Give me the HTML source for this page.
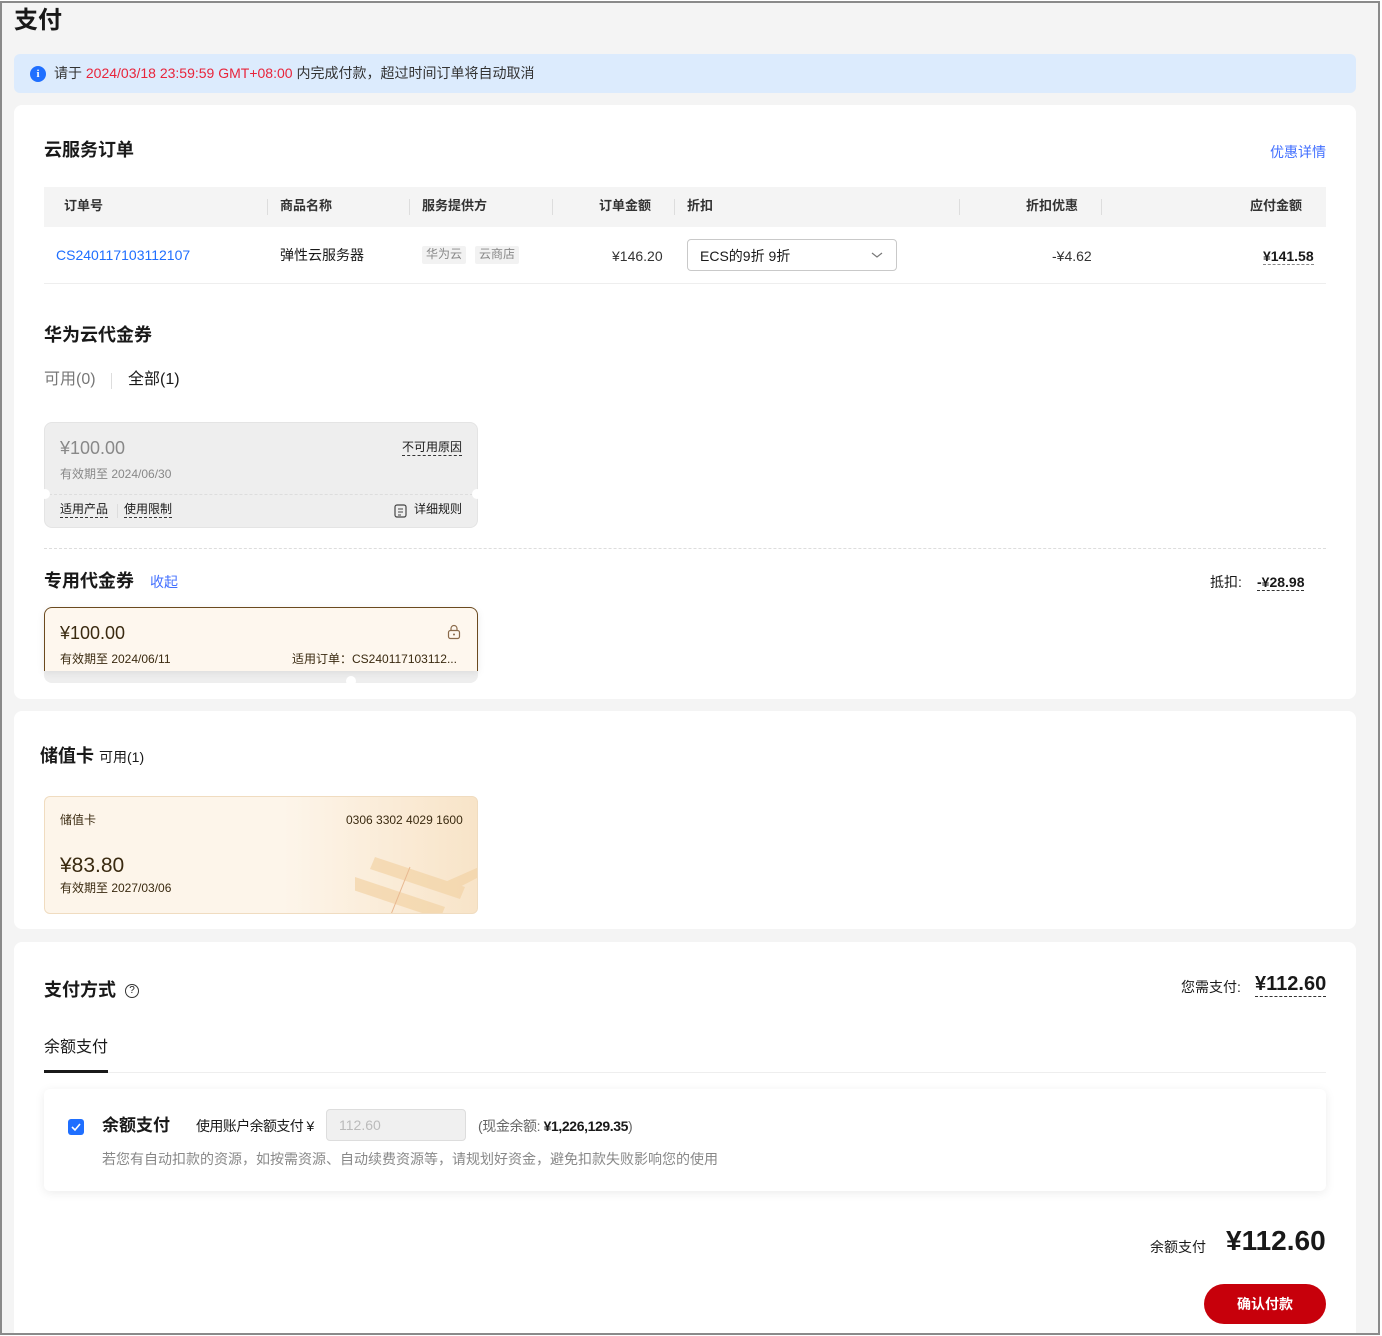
<!DOCTYPE html>
<html><head><meta charset="utf-8"><style>
*{box-sizing:border-box;margin:0;padding:0}
body{width:1382px;height:1336px;background:#fff;font-family:"Liberation Sans","Noto Sans CJK SC",sans-serif;color:#191919;position:relative;overflow:hidden;font-size:13px;line-height:1.15}
.frame{position:absolute;left:0;top:1px;width:1380px;height:1334px;border:2px solid #8a8a8a;background:#f4f4f4;overflow:hidden}
.a{position:absolute;white-space:nowrap}
.card{position:absolute;background:#fff;border-radius:8px}
.dash{border-bottom:1px dashed #333}
.th{color:#333;font-weight:bold;font-size:13px}
.sep{position:absolute;width:1px;height:16px;background:#ddd}
</style></head><body>
<div class="frame">
<div class="a" style="left:12px;top:4px;font-size:24px;font-weight:bold;">支付</div>
<div class="a" style="left:12px;top:51px;width:1342px;height:39px;background:#dcebfd;border-radius:6px"></div>
<div class="a" style="left:28px;top:63px;width:16px;height:16px;border-radius:50%;background:#1f6fff;color:#fff;font-size:11px;font-weight:bold;text-align:center;line-height:16px;font-family:'Liberation Serif',serif">i</div>
<div class="a" style="left:52px;top:62px;font-size:14px;color:#333">请于 <span style="color:#e8243b">2024/03/18 23:59:59 GMT+08:00</span> 内完成付款，超过时间订单将自动取消</div>

<div class="card" style="left:12px;top:102px;width:1342px;height:594px"></div>
<div class="a" style="left:42px;top:137px;font-size:18px;font-weight:bold">云服务订单</div>
<div class="a" style="left:1268px;top:141px;font-size:14px;color:#4370ff">优惠详情</div>
<div class="a" style="left:42px;top:184px;width:1282px;height:40px;background:#f4f4f4"></div>
<div class="a th" style="left:62px;top:196px">订单号</div>
<div class="sep" style="left:265px;top:196px"></div>
<div class="a th" style="left:278px;top:196px">商品名称</div>
<div class="sep" style="left:407px;top:196px"></div>
<div class="a th" style="left:420px;top:196px">服务提供方</div>
<div class="sep" style="left:550px;top:196px"></div>
<div class="a th" style="left:597px;top:196px">订单金额</div>
<div class="sep" style="left:672px;top:196px"></div>
<div class="a th" style="left:685px;top:196px">折扣</div>
<div class="sep" style="left:957px;top:196px"></div>
<div class="a th" style="left:1024px;top:196px">折扣优惠</div>
<div class="sep" style="left:1099px;top:196px"></div>
<div class="a th" style="left:1248px;top:196px">应付金额</div>
<div class="a" style="left:54px;top:244px;color:#1f6fff;font-size:14px">CS240117103112107</div>
<div class="a" style="left:278px;top:244px;font-size:14px">弹性云服务器</div>
<div class="a" style="left:420px;top:243px;background:#f2f2f2;color:#888;font-size:12px;padding:2px 4px;border-radius:2px">华为云</div>
<div class="a" style="left:473px;top:243px;background:#f2f2f2;color:#888;font-size:12px;padding:2px 4px;border-radius:2px">云商店</div>
<div class="a" style="left:610px;top:245px;font-size:14px;color:#333">¥146.20</div>
<div class="a" style="left:685px;top:236px;width:210px;height:32px;border:1px solid #c9c9c9;border-radius:4px"></div>
<div class="a" style="left:698px;top:245px;font-size:14px">ECS的9折 9折</div>
<svg class="a" style="left:869px;top:247px" width="12" height="10"><path d="M1 3l5 4 5-4" fill="none" stroke="#777" stroke-width="1.2"/></svg>
<div class="a" style="left:1050px;top:245px;font-size:14px;color:#333">-¥4.62</div>
<div class="a dash" style="left:1261px;top:245px;font-size:14px;font-weight:bold;border-bottom-color:#888">¥141.58</div>
<div class="a" style="left:42px;top:280px;width:1282px;height:1px;background:#eee"></div>

<div class="a" style="left:42px;top:322px;font-size:18px;font-weight:bold">华为云代金券</div>
<div class="a" style="left:42px;top:368px;font-size:16px;color:#777">可用(0)</div>
<div class="sep" style="left:109px;top:370px"></div>
<div class="a" style="left:126px;top:368px;font-size:16px">全部(1)</div>

<div class="a" style="left:42px;top:419px;width:434px;height:106px;background:#eeeeee;border-radius:8px;border:1px solid #e4e4e4"></div>
<div class="a" style="left:42px;top:491px;width:434px;height:0;border-top:1px dashed #ddd"></div>
<div class="a" style="left:38px;top:486px;width:10px;height:10px;border-radius:50%;background:#fff"></div>
<div class="a" style="left:470px;top:486px;width:10px;height:10px;border-radius:50%;background:#fff"></div>
<div class="a" style="left:58px;top:435px;font-size:18px;color:#888">¥100.00</div>
<div class="a dash" style="left:400px;top:438px;font-size:12px">不可用原因</div>
<div class="a" style="left:58px;top:465px;font-size:12px;color:#888">有效期至 2024/06/30</div>
<div class="a dash" style="left:58px;top:500px;font-size:12px">适用产品</div>
<div class="sep" style="left:115px;top:501px;height:14px"></div>
<div class="a dash" style="left:122px;top:500px;font-size:12px">使用限制</div>
<svg class="a" style="left:392px;top:501px" width="13" height="14"><rect x="1" y="1" width="11" height="12" rx="2" fill="none" stroke="#444" stroke-width="1.2"/><path d="M4 5h5M4 8h5M4 11h3" stroke="#444"/></svg>
<div class="a" style="left:412px;top:500px;font-size:12px">详细规则</div>
<div class="a" style="left:42px;top:545px;width:1282px;border-top:1px dashed #ddd"></div>

<div class="a" style="left:42px;top:568px;font-size:18px;font-weight:bold">专用代金券</div>
<div class="a" style="left:148px;top:571px;font-size:14px;color:#4370ff">收起</div>
<div class="a" style="left:1208px;top:571px;font-size:14px">抵扣:</div>
<div class="a dash" style="left:1255px;top:571px;font-size:14px;font-weight:bold">-¥28.98</div>
<div class="a" style="left:42px;top:656px;width:434px;height:24px;background:#eee;border-radius:0 0 8px 8px"></div>
<div class="a" style="left:42px;top:604px;width:434px;height:64px;background:#fef7ee;border:1px solid #6b4a1f;border-bottom:none;border-radius:8px 8px 0 0;box-shadow:0 2px 8px rgba(0,0,0,.08)"></div>
<div class="a" style="left:58px;top:620px;font-size:18px;color:#3a2a10">¥100.00</div>
<svg class="a" style="left:445px;top:621px" width="14" height="16"><rect x="1.5" y="6.5" width="11" height="8" rx="2" fill="none" stroke="#8a6a4a" stroke-width="1.2"/><path d="M4 6.5V4.5a3 3 0 0 1 6 0v2" fill="none" stroke="#8a6a4a" stroke-width="1.2"/><circle cx="7" cy="10.5" r="1" fill="#8a6a4a"/></svg>
<div class="a" style="left:58px;top:650px;font-size:12px;color:#3a2a10">有效期至 2024/06/11</div>
<div class="a" style="left:290px;top:650px;font-size:12px;color:#3a2a10">适用订单：CS240117103112...</div>
<div class="a" style="left:344px;top:673px;width:10px;height:10px;border-radius:50%;background:#fff"></div>

<div class="card" style="left:12px;top:708px;width:1342px;height:218px"></div>
<div class="a" style="left:38px;top:743px;font-size:18px;font-weight:bold">储值卡 <span style="font-size:14px;font-weight:normal">可用(1)</span></div>
<div class="a" style="left:42px;top:793px;width:434px;height:118px;border:1px solid #f0dcc0;border-radius:6px;background:linear-gradient(90deg,#fdf5ea 0%,#fdf5ea 55%,#f8e4c8 100%);overflow:hidden">
<svg style="position:absolute;left:310px;top:30px" width="124" height="90"><g fill="#f3d3a6" opacity=".7"><polygon points="20,30 110,60 105,72 15,42"/><polygon points="0,50 90,80 85,92 -5,62"/><polygon points="90,55 124,40 124,50 95,65"/></g><path d="M55 40L35 90" stroke="#e8b890" stroke-width="1"/></svg>
</div>
<div class="a" style="left:58px;top:811px;font-size:12px;color:#3a2a10">储值卡</div>
<div class="a" style="left:344px;top:811px;font-size:12px;color:#3a2a10">0306 3302 4029 1600</div>
<div class="a" style="left:58px;top:851px;font-size:21px;color:#3a2a10">¥83.80</div>
<div class="a" style="left:58px;top:879px;font-size:12px;color:#3a2a10">有效期至 2027/03/06</div>

<div class="card" style="left:12px;top:939px;width:1342px;height:420px"></div>
<div class="a" style="left:42px;top:977px;font-size:18px;font-weight:bold">支付方式</div>
<div class="a" style="left:123px;top:981px;width:14px;height:14px;border:1px solid #333;border-radius:50%;font-size:10px;text-align:center;line-height:12px">?</div>
<div class="a" style="left:1179px;top:976px;font-size:14px">您需支付:</div>
<div class="a dash" style="left:1253px;top:970px;font-size:20px;font-weight:bold">¥112.60</div>
<div class="a" style="left:42px;top:1036px;font-size:16px">余额支付</div>
<div class="a" style="left:42px;top:1069px;width:1282px;height:1px;background:#eee"></div>
<div class="a" style="left:42px;top:1067px;width:64px;height:3px;background:#191919"></div>
<div class="a" style="left:42px;top:1086px;width:1282px;height:102px;background:#fff;border-radius:6px;box-shadow:0 2px 10px rgba(0,0,0,.08)"></div>
<div class="a" style="left:66px;top:1116px;width:16px;height:16px;background:#1f6fff;border-radius:3px"></div>
<svg class="a" style="left:66px;top:1116px" width="16" height="16"><path d="M4 8l3 3 5-6" fill="none" stroke="#fff" stroke-width="1.6"/></svg>
<div class="a" style="left:100px;top:1113px;font-size:17px;font-weight:bold">余额支付</div>
<div class="a" style="left:194px;top:1115px;font-size:14px;letter-spacing:-0.6px">使用账户余额支付 ¥</div>
<div class="a" style="left:324px;top:1106px;width:140px;height:32px;background:#f0f0f0;border:1px solid #ddd;border-radius:4px;color:#bbb;font-size:14px;padding:7px 12px">112.60</div>
<div class="a" style="left:476px;top:1115px;font-size:14px;color:#666;letter-spacing:-0.4px">(现金余额: <b style="color:#191919">¥1,226,129.35</b>)</div>
<div class="a" style="left:100px;top:1148px;font-size:14px;color:#888">若您有自动扣款的资源，如按需资源、自动续费资源等，请规划好资金，避免扣款失败影响您的使用</div>
<div class="a" style="left:1148px;top:1236px;font-size:14px">余额支付</div>
<div class="a" style="left:1224px;top:1222px;font-size:28px;font-weight:bold">¥112.60</div>
<div class="a" style="left:1202px;top:1281px;width:122px;height:40px;background:#c7000b;border-radius:20px;color:#fff;font-size:14px;font-weight:bold;text-align:center;line-height:40px">确认付款</div>
</div>
</body></html>
